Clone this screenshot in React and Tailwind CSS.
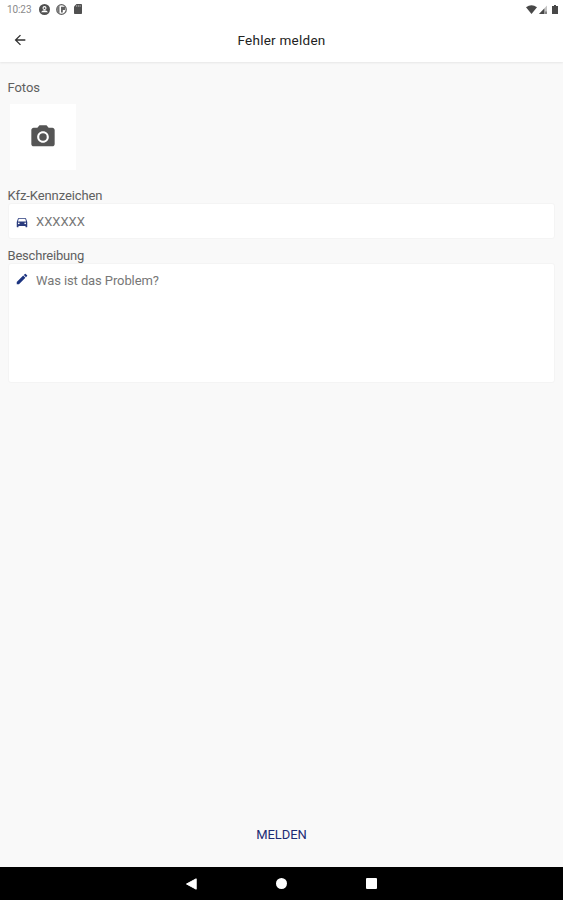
import React, { useState } from 'react';
import {
  MdArrowBack,
  MdDirectionsCar,
  MdEdit,
  MdPhotoCamera,
} from 'react-icons/md';

const StatusBar = () => (
  <div className="flex h-[18px] items-center justify-between pl-[7px] pr-1 text-[#555555]">
    <div className="flex items-center">
      <span className="w-[25px] whitespace-nowrap pt-[2px] text-[10px] leading-[18px] tracking-[-0.1px] text-[#8a8a8a]">10:23</span>
      <svg className="ml-[7px] h-[11px] w-[11px]" viewBox="0 0 11 11">
        <circle cx="5.5" cy="5.5" r="5.5" fill="#505050" />
        <path d="M2 8.2Q3 6.2 5.5 6.2T9 8.2Z" fill="#fff" />
        <circle cx="5.5" cy="4" r="2" fill="#fff" />
        <circle cx="5.5" cy="4.2" r=".9" fill="#505050" />
      </svg>
      <svg className="ml-[6px] h-[11px] w-[11px]" viewBox="0 0 11 11">
        <circle cx="5.5" cy="5.5" r="4.8" fill="#fff" stroke="#606060" strokeWidth="1.2" />
        <path d="M1 3.5 3.5 1V10L1.5 8Z" fill="#777" />
        <path d="M5 2.8h4.2v3.2H6.8V8.5H5Z" fill="#606060" />
      </svg>
      <svg className="ml-[7px] h-[10px] w-[8px]" viewBox="0 0 8 10">
        <path d="M2.5 0H7.2Q8 0 8 .8V9.2Q8 10 7.2 10H.8Q0 10 0 9.2V2.5Z" fill="#505050" />
        <path d="M2.7 1.2v1.6M4.4 1.2v1.6M6.1 1.2v1.6" stroke="#ccc" strokeWidth=".7" />
      </svg>
    </div>
    <div className="flex items-center">
      <svg className="h-[9px] w-[11px]" viewBox="0 0 11 9">
        <path d="M0 2.2Q5.5-1.8 11 2.2L5.5 9Z" fill="#484848" />
      </svg>
      <svg className="ml-[2px] h-[9px] w-[8px]" viewBox="0 0 8 9">
        <path d="M8 .5V9H0Z" fill="#c4c4c4" />
        <path d="M5.3 3.4V9H0Z" fill="#484848" />
        <path d="M7 6.5V9" stroke="#484848" strokeWidth="1" />
      </svg>
      <svg className="ml-[5px] mr-[1px] h-[9px] w-[6px]" viewBox="0 0 6 9">
        <path d="M2 0h2v1h2v8H0V1h2Z" fill="#484848" />
      </svg>
    </div>
  </div>
);

const Header = () => (
  <header className="h-[62px] shrink-0 bg-white shadow-[0_1px_2px_rgba(0,0,0,0.08)]">
    <StatusBar />
    <div className="grid h-[44px] grid-cols-[1fr_auto_1fr] items-center">
      <button className="ml-3 w-4 text-[#303030]" aria-label="Zurück">
        <MdArrowBack size={16} />
      </button>
      <h1 className="text-[13.5px] leading-[18px] tracking-[0.25px] text-[#222222]">Fehler melden</h1>
    </div>
  </header>
);

const NavigationBar = () => (
  <nav className="flex h-[33px] shrink-0 items-center justify-center gap-[79px] bg-black">
    <svg className="h-[12px] w-[11px]" viewBox="0 0 11 12">
      <path d="M.5 6 10.2.8V11.2Z" fill="#fff" stroke="#fff" strokeLinejoin="round" />
    </svg>
    <div className="h-[11px] w-[11px] rounded-full bg-white" />
    <div className="h-[11px] w-[11px] rounded-[1px] bg-white" />
  </nav>
);

const App = () => {
  const [plate, setPlate] = useState('');
  const [description, setDescription] = useState('');

  return (
    <div className="flex h-screen flex-col bg-[#f9f9f9] font-[Roboto,sans-serif]">
      <Header />

      <main className="flex flex-1 flex-col px-2 pt-[18px] text-[13px] leading-4 text-[#606060]">
        <span className="-ml-[0.5px] tracking-[-0.05px]">Fotos</span>
        <button className="ml-[2px] mt-[8px] flex h-[66px] w-[66px] items-center justify-center bg-white text-[#555555]" aria-label="Foto aufnehmen">
          <MdPhotoCamera size={28} />
        </button>

        <label htmlFor="plate" className="-mb-px -ml-[0.5px] mt-[18px] w-fit tracking-[-0.1px]">Kfz-Kennzeichen</label>
        <div className="flex h-[36px] items-center rounded-[3px] border border-[#f4f4f4] bg-white pl-[6px] pt-[2px]">
          <MdDirectionsCar size={14} className="-mt-px shrink-0 text-[#2b3c7e]" />
          <input
            id="plate"
            value={plate}
            onChange={(e) => setPlate(e.target.value)}
            placeholder="XXXXXX"
            className="ml-[7px] flex-1 outline-none placeholder:text-[#777777]"
          />
        </div>

        <label htmlFor="description" className="-mb-px -ml-[0.5px] mt-[9px] w-fit tracking-[-0.2px]">Beschreibung</label>
        <div className="flex h-[120px] rounded-[3px] border border-[#f4f4f4] bg-white pl-[6px] pt-[8px]">
          <MdEdit size={14} className="shrink-0 text-[#1c3480]" />
          <textarea
            id="description"
            value={description}
            onChange={(e) => setDescription(e.target.value)}
            placeholder="Was ist das Problem?"
            className="ml-[7px] mt-px flex-1 resize-none tracking-[-0.1px] outline-none placeholder:text-[#777777]"
          />
        </div>

        <button className="mb-[24px] mt-auto self-center text-[13px] tracking-[-0.1px] text-[#1c2b74]">MELDEN</button>
      </main>

      <NavigationBar />
    </div>
  );
};

export default App;
